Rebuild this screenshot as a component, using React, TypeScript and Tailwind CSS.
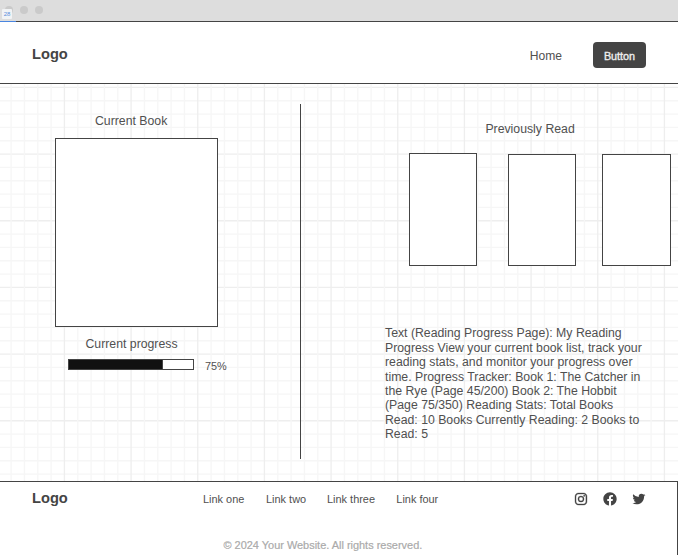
import { BiLogoFacebookCircle, BiLogoInstagram, BiLogoTwitter } from "react-icons/bi";

const CELL = 40 / 3;

function GridPaper() {
  const columns = Array.from({ length: 50 }, (_, i) => i);
  const rows = Array.from({ length: 30 }, (_, i) => i);
  return (
    <svg className="absolute inset-0 h-full w-full" aria-hidden="true">
      {rows.map((i) => (
        <line key={i} x1="0" x2="678" y1={3.4 + i * CELL} y2={3.4 + i * CELL} stroke={i % 5 === 0 ? "#eeeeee" : "#f6f6f6"} strokeWidth="1.33" />
      ))}
      {columns.map((i) => (
        <line key={i} y1="0" y2="397" x1={11.1 + i * CELL} x2={11.1 + i * CELL} stroke={i % 5 === 4 ? "#eeeeee" : "#f6f6f6"} strokeWidth="1.33" />
      ))}
    </svg>
  );
}

function TitleBar() {
  return (
    <div className="relative h-[22px] shrink-0 border-b border-[#444] bg-[#ddd]">
      <div className="flex gap-[7px] pl-[5px] pt-[6px]">
        <span className="size-2 rounded-full bg-[#cacaca]" />
        <span className="size-2 rounded-full bg-[#cacaca]" />
        <span className="size-2 rounded-full bg-[#cacaca]" />
      </div>
      <span className="absolute left-[2px] top-[9px] flex h-[10px] w-[10px] items-center justify-center rounded-[1px] bg-[#f1f3f5] text-[6px] leading-none text-[#5b8fdc]">28</span>
      <span className="absolute left-0 top-[21px] h-px w-4 bg-[#4a86e0]" />
    </div>
  );
}

const links = [
  { label: "Link one", width: "w-[63px]" },
  { label: "Link two", width: "w-[61px]" },
  { label: "Link three", width: "w-[69.3px]" },
  { label: "Link four", width: "w-[50px]" },
];

const story = [
  "Text (Reading Progress Page): My Reading",
  "Progress View your current book list, track your",
  "reading stats, and monitor your progress over",
  "time. Progress Tracker: Book 1: The Catcher in",
  "the Rye (Page 45/200) Book 2: The Hobbit",
  "(Page 75/350) Reading Stats: Total Books",
  "Read: 10 Books Currently Reading: 2 Books to",
  "Read: 5",
];

export default function App() {
  return (
    <div className="flex h-[555px] w-[678px] flex-col overflow-hidden bg-white font-['Liberation_Sans',Arial,sans-serif] text-[12.27px] leading-[14px] text-[#505050]">
      <TitleBar />
      <header className="flex h-[62px] shrink-0 items-start border-b border-[#444] pl-8 pr-8">
        <span className="mt-6 text-[14.67px] font-bold leading-4 text-[#444]">Logo</span>
        <nav className="ml-auto flex items-start">
          <a className="mt-[27px] text-[12.1px]">Home</a>
          <button className="ml-[31px] mt-5 h-[26px] w-[53px] rounded-[4px] bg-[#444] pt-[2px] text-[10.8px] leading-3 text-[#eee] [-webkit-text-stroke:0.35px_#eee]">Button</button>
        </nav>
      </header>

      <main className="relative h-[397px] shrink-0">
        <GridPaper />
        <div className="relative flex h-full">
          <section className="w-[300px] shrink-0 pt-[30px]">
            <h2 className="ml-[95px]">Current Book</h2>
            <div className="ml-[55px] mt-[10px] h-[189px] w-[163px] border border-[#444] bg-white" />
            <h3 className="ml-[85.5px] mt-[10px]">Current progress</h3>
            <div className="ml-[68px] mt-2 flex h-[11px]">
              <div className="h-[11px] w-[126px] border border-[#444] bg-white">
                <div className="h-full w-[94px] border-r border-[#444] bg-[#111]" />
              </div>
              <span className="ml-[11px] mt-px text-[10.9px] leading-3">75%</span>
            </div>
          </section>
          <div className="mt-5 h-[355px] w-px shrink-0 bg-[#444]" />
          <section className="flex-1 pt-[38px]">
            <h2 className="ml-[184.4px]">Previously Read</h2>
            <div className="ml-[108px] mt-[17px] flex items-end">
              <div className="h-[113px] w-[68px] border border-[#444] bg-white" />
              <div className="ml-[31px] h-[112px] w-[68px] border border-[#444] bg-white" />
              <div className="ml-[26px] h-[112px] w-[69px] border border-[#444] bg-white" />
            </div>
            <p className="ml-[84px] mt-[60.4px] whitespace-nowrap leading-[14.4px]">
              {story.map((line) => (
                <span key={line} className="block">{line}</span>
              ))}
            </p>
          </section>
        </div>
      </main>

      <footer className="h-[74px] shrink-0 border-r border-t border-[#444] bg-white">
        <div className="flex h-6 items-start pl-8 pt-2">
          <span className="w-[171px] text-[14.67px] font-bold leading-4 text-[#444]">Logo</span>
          <nav className="mt-[3px] flex text-[10.95px] leading-3">
            {links.map((link) => (
              <a key={link.label} className={`${link.width} whitespace-nowrap`}>{link.label}</a>
            ))}
          </nav>
          <div className="ml-auto mr-[30px] mt-[0.6px] flex gap-[13px] text-[#444]">
            <BiLogoInstagram className="size-4 stroke-[#444] [stroke-width:0.5]" />
            <BiLogoFacebookCircle className="size-4" />
            <BiLogoTwitter className="size-4" />
          </div>
        </div>
        <p className="ml-[223.5px] mt-[33px] text-[10.95px] leading-3 text-[#aaa] [-webkit-text-stroke:0.2px_#aaa]">© 2024 Your Website. All rights reserved.</p>
      </footer>
    </div>
  );
}
